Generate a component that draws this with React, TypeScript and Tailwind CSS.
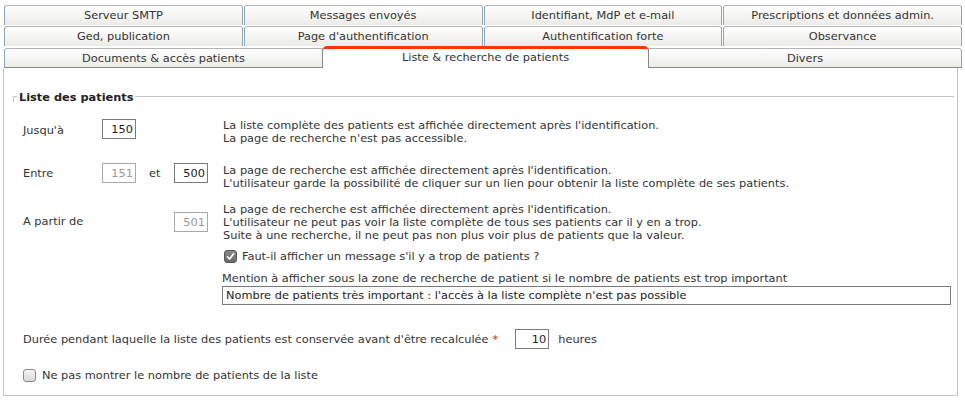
import React from "react";

const tabBase =
  "flex-1 h-[20px] flex items-center justify-center text-[#333] bg-gradient-to-b from-[#ffffff] to-[#ebebe6] border-t border-t-[#b4b4b4] border-l border-l-[#8ea5b6] border-r border-r-[#8ea5b6] rounded-tl-[3px] rounded-tr-[3px]";

function Tab({ label }: { label: string }) {
  return <div className={tabBase}>{label}</div>;
}

function NumBox({ value, disabled, w = "w-[34px]" }: { value: string; disabled?: boolean; w?: string }) {
  return (
    <div
      className={`${w} h-[20px] border flex items-center justify-end pr-[2px] bg-white ${
        disabled ? "border-[#a9a9a9] text-[#999]" : "border-[#7a7a7a] text-[#222]"
      }`}
    >
      {value}
    </div>
  );
}

function Checked() {
  return (
    <div className="w-[13px] h-[13px] rounded-[3px] border border-[#555] bg-gradient-to-b from-[#8a8a8a] to-[#6a6a6a] flex items-center justify-center">
      <svg width="9" height="9" viewBox="0 0 9 9">
        <path d="M1.5 4.8 L3.6 7 L7.6 1.8" stroke="#fff" strokeWidth="1.6" fill="none" strokeLinecap="round" strokeLinejoin="round" />
      </svg>
    </div>
  );
}

function Unchecked() {
  return (
    <div className="w-[13px] h-[13px] rounded-[3px] border border-[#8a8a8a] bg-gradient-to-b from-[#f4f4f4] to-[#d8d8d8]" />
  );
}

export default function App() {
  return (
    <div
      className="w-[965px] h-[402px] bg-white text-[11.35px] leading-[13px] text-[#333] overflow-hidden"
      style={{ fontFamily: '"DejaVu Sans", Verdana, sans-serif' }}
    >
      <div className="pl-[4px] pr-[3px] pt-[5px] flex flex-col">
        <div className="flex gap-[1px]">
          <Tab label="Serveur SMTP" />
          <Tab label="Messages envoyés" />
          <Tab label="Identifiant, MdP et e-mail" />
          <Tab label="Prescriptions et données admin." />
        </div>
        <div className="flex gap-[1px] mt-[1px]">
          <Tab label="Ged, publication" />
          <Tab label="Page d'authentification" />
          <Tab label="Authentification forte" />
          <Tab label="Observance" />
        </div>
        <div className="flex mt-[1px] items-end h-[21px]">
          <div className="w-[319px] h-[20px] flex items-center justify-center bg-gradient-to-b from-[#ffffff] to-[#ebebe6] border-t border-t-[#b4b4b4] border-l border-l-[#8ea5b6] border-r border-r-[#888] border-b border-b-[#888] rounded-tl-[3px]">
            Documents &amp; accès patients
          </div>
          <div className="w-[325px] h-[22px] -mt-[2px] flex items-center justify-center bg-white border-t-[3px] border-t-[#ff3300] rounded-t-[4px] pb-[2px]">
            Liste &amp; recherche de patients
          </div>
          <div className="flex-1 h-[20px] flex items-center justify-center bg-gradient-to-b from-[#ffffff] to-[#ebebe6] border-t border-t-[#b4b4b4] border-l border-l-[#888] border-r border-r-[#8ea5b6] border-b border-b-[#888] rounded-tr-[3px]">
            Divers
          </div>
        </div>
      </div>

      <div className="ml-[3px] w-[955px] h-[328px] border-l border-r border-b border-[#c4c4c4] pt-[28px] pl-[9px] pr-[3px]">
        <div className="relative border-t border-[#c4c4c4] h-[1px]">
          <div className="absolute left-0 top-0 w-[1px] h-[5px] bg-[#c4c4c4]" />
          <div className="absolute left-[4px] -top-[7px] bg-white px-[2px] font-bold text-[#222] leading-[14px]">
            Liste des patients
          </div>
        </div>

        <div className="pl-[10px] mt-[22px] flex flex-col">
          <div className="flex items-start">
            <div className="w-[79px] pt-[5px]">Jusqu'à</div>
            <div className="w-[121px]"><NumBox value="150" /></div>
            <div>
              <div>La liste complète des patients est affichée directement après l'identification.</div>
              <div>La page de recherche n'est pas accessible.</div>
            </div>
          </div>

          <div className="flex items-start mt-[18px]">
            <div className="w-[79px] pt-[4px]">Entre</div>
            <div className="w-[121px] flex items-center">
              <NumBox value="151" disabled />
              <span className="ml-[13px] w-[25px]">et</span>
              <NumBox value="500" />
            </div>
            <div className="mt-[1px]">
              <div>La page de recherche est affichée directement après l'identification.</div>
              <div>L'utilisateur garde la possibilité de cliquer sur un lien pour obtenir la liste complète de ses patients.</div>
            </div>
          </div>

          <div className="flex items-start mt-[13px]">
            <div className="w-[151px] pt-[12px]">A partir de</div>
            <div className="w-[49px] pt-[9px]"><NumBox value="501" disabled /></div>
            <div>
              <div>La page de recherche est affichée directement après l'identification.</div>
              <div>L'utilisateur ne peut pas voir la liste complète de tous ses patients car il y en a trop.</div>
              <div>Suite à une recherche, il ne peut pas non plus voir plus de patients que la valeur.</div>
            </div>
          </div>

          <div className="pl-[199px] mt-[8px]">
            <div className="flex items-center pl-[2px]">
              <Checked />
              <span className="ml-[5px]">Faut-il afficher un message s'il y a trop de patients ?</span>
            </div>
            <div className="mt-[9px]">Mention à afficher sous la zone de recherche de patient si le nombre de patients est trop important</div>
            <div className="mt-[1px] w-[729px] h-[19px] border border-[#7a7a7a] flex items-center pl-[3px] text-[#222]">
              Nombre de patients très important : l'accès à la liste complète n'est pas possible
            </div>
          </div>

          <div className="flex items-center mt-[24px]">
            <span>Durée pendant laquelle la liste des patients est conservée avant d'être recalculée</span>
            <span className="text-[#e02020] ml-[4px]">*</span>
            <div className="ml-[17px]"><NumBox value="10" /></div>
            <span className="ml-[9px]">heures</span>
          </div>

          <div className="flex items-center mt-[20px]">
            <Unchecked />
            <span className="ml-[6px]">Ne pas montrer le nombre de patients de la liste</span>
          </div>
        </div>
      </div>
    </div>
  );
}
